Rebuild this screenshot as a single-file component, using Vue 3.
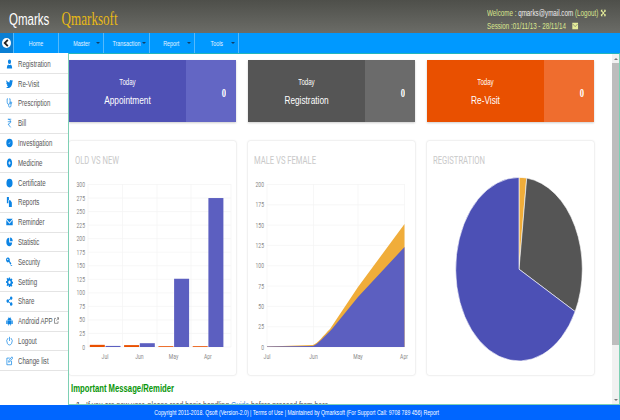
<template>
  <div class="page">
    <header class="top">
      <div class="brand sq">
        <span class="brand-name">Qmarks</span>
        <span class="brand-soft">Qmarksoft</span>
      </div>
      <div class="session">
        <div class="sq session-line">
          Welcome : <span class="mail">qmarks@ymail.com</span> (Logout)
          <svg class="tiny" viewBox="0 0 12 12"><path d="M1 1h4L3.600 2.400 6 4.800 8.400 2.400 7 1h4v4L9.600 3.600 7.200 6l2.400 2.400L11 7v4H7l1.400-1.400L6 7.200 3.600 9.600 5 11H1V7l1.400 1.400L4.800 6 2.400 3.600 1 5z" /></svg>
        </div>
        <div class="sq session-line">
          Session :01/11/13 - 28/11/14
          <svg class="tiny mailbox" viewBox="0 0 12 12"><path d="M0 1h12v10H0z" /><path class="flap" d="M1 3l5 4 5-4" /></svg>
        </div>
      </div>
    </header>

    <nav class="menu">
      <div class="back">
        <span class="back-circle">
          <svg viewBox="0 0 10 10"><path d="M6.500 1.500L3 5l3.500 3.500" /></svg>
        </span>
      </div>
      <a v-for="item in menu" :key="item.label" class="menu-item">
        <span class="sq-c">{{ item.label }}</span>
        <i v-if="item.caret" class="caret"></i>
      </a>
    </nav>

    <div class="body">
      <aside class="side">
        <a v-for="item in sideItems" :key="item.label" class="side-item">
          <svg class="side-icon" viewBox="0 0 24 24" preserveAspectRatio="none">
            <path v-if="item.fill" :d="item.fill" fill-rule="evenodd" />
            <path v-if="item.line" class="line" :d="item.line" />
          </svg>
          <span class="sq side-label">{{ item.label }}
            <svg v-if="item.external" class="external" viewBox="0 0 10 10"><path d="M8 6v3H1V2h3M5 5l4-4M6 1h3v3" /></svg>
          </span>
        </a>
      </aside>

      <main class="main">
        <div class="content">
          <section class="row stats">
            <div v-for="s in stats" :key="s.title" class="stat" :class="s.cls">
              <div class="stat-left">
                <div class="stat-today sq-c">Today</div>
                <div class="stat-title sq-c">{{ s.title }}</div>
              </div>
              <div class="stat-value"><span class="sq-r">0</span></div>
            </div>
          </section>

          <section class="row charts">
            <div class="chart-card">
              <h4><span class="sq">OLD VS NEW</span></h4>
              <svg class="chart" viewBox="0 0 167 200">
                <line v-for="g in barGrid" :key="g.label" class="grid" x1="19" x2="162" :y1="g.y" :y2="g.y" />
                <line v-for="x in [19, 53.500, 88, 122, 162]" :key="x" class="grid" :x1="x" :x2="x" y1="15" y2="178" />
                <text v-for="g in barGrid" :key="'t' + g.label" class="tick" text-anchor="end" :transform="squeeze(16, g.y + 2.500)">{{ g.label }}</text>
                <g v-for="(b, i) in bars" :key="b.month">
                  <rect class="bar-old" :x="20.800 + i * 34.300" :y="barY(b.old)" width="15" :height="178 - barY(b.old)" />
                  <rect class="bar-new" :x="36.500 + i * 34.300" :y="barY(b.fresh)" width="15" :height="178 - barY(b.fresh)" />
                  <text class="tick" text-anchor="middle" :transform="squeeze(36 + i * 34.300, 190)">{{ b.month }}</text>
                </g>
              </svg>
            </div>

            <div class="chart-card">
              <h4><span class="sq">MALE VS FEMALE</span></h4>
              <svg class="chart" viewBox="0 0 167 200">
                <line v-for="g in areaGrid" :key="g.label" class="grid" x1="19" x2="156.500" :y1="g.y" :y2="g.y" />
                <line v-for="x in [19, 65.500, 110, 156.500]" :key="x" class="grid" :x1="x" :x2="x" y1="15" y2="178" />
                <text v-for="g in areaGrid" :key="'t' + g.label" class="tick" text-anchor="end" :transform="squeeze(16, g.y + 2.500)">{{ g.label }}</text>
                <path class="area-yellow" d="M19 177.500L65 176C70 174 75 167 82 160L110 118L156.500 55V178H19Z" />
                <path class="area-blue" d="M19 177.500L65 177C70 175 76 168 84 160L110 128L156.500 78V178H19Z" />
                <text v-for="m in areaMonths" :key="m.label" class="tick" text-anchor="middle" :transform="squeeze(m.x, 190)">{{ m.label }}</text>
              </svg>
            </div>

            <div class="chart-card">
              <h4><span class="sq">REGISTRATION</span></h4>
              <svg class="chart" viewBox="0 0 167 200">
                <path v-for="p in pie" :key="p.color" :d="p.d" :fill="p.color" class="slice" />
              </svg>
            </div>
          </section>

          <h3 class="notice"><span class="sq">Important Message/Remider</span></h3>
          <ol class="notes">
            <li><span class="sq">If you are new user, please read basic handling <a>Guide</a> before proceed from here</span></li>
          </ol>
        </div>

        <div class="scrollbar">
          <span class="arrow up"></span>
          <span class="thumb"></span>
          <span class="arrow down"></span>
        </div>
      </main>
    </div>

    <footer class="foot">
      <span class="sq-c">Copyright 2011-2018. Qsoft (Version-2.0) | Terms of Use | Maintained by Qmarksoft (For Support Call: 9708 789 456) Report</span>
    </footer>
  </div>
</template>

<script setup>
const menu = [
  { label: 'Home', caret: false },
  { label: 'Master', caret: true },
  { label: 'Transaction', caret: true },
  { label: 'Report', caret: true },
  { label: 'Tools', caret: true },
];

const sideItems = [
  { label: 'Registration', fill: 'M12 1a5.500 5.500 0 1 1 0 11 5.500 5.500 0 0 1 0-11zM3 23c0-6 2-9.500 5-10 1 .8 2.500 1.300 4 1.300s3-.5 4-1.300c3 .5 5 4 5 10z' },
  { label: 'Re-Visit', fill: 'M23.950 4.570a10 10 0 0 1-2.820.770 4.960 4.960 0 0 0 2.160-2.720c-.950.550-2 .960-3.120 1.190a4.920 4.920 0 0 0-8.390 4.490C7.690 8.100 4.070 6.130 1.640 3.160a4.820 4.820 0 0 0-.670 2.480c0 1.710.870 3.210 2.190 4.100a4.900 4.900 0 0 1-2.230-.620v.060a4.920 4.920 0 0 0 3.950 4.830 5 5 0 0 1-2.210.080 4.940 4.940 0 0 0 4.600 3.420A9.870 9.870 0 0 1 0 19.540a14 14 0 0 0 7.560 2.210c9.050 0 14-7.500 14-13.980 0-.210 0-.420-.020-.630a9.940 9.940 0 0 0 2.460-2.550z' },
  { label: 'Prescription', line: 'M7 2H4v8a5 5 0 0 0 10 0V2h-3M9 15v3a4 4 0 0 0 8 0v-4M17 9a2.500 2.500 0 1 1 0 5 2.500 2.500 0 0 1 0-5z' },
  { label: 'Bill', line: 'M6 3h12M6 9h12M8 3c6 0 7 2.500 7 6s-3 5.500-7 5.500H7l9 8' },
  { label: 'Investigation', fill: 'M12 2a11 10 0 1 1 0 20 11 10 0 0 1 0-20zM7 13c2 1 7-1 8-5 1 3-3 8-8 5z' },
  { label: 'Medicine', fill: 'M12 1c5 0 9 5 9 11s-4 11-9 11-9-5-9-11S7 1 12 1zM11 8v3H8v2h3v3h2v-3h3v-2h-3V8z' },
  { label: 'Certificate', fill: 'M12 1.500a10.500 10.500 0 1 1 0 21 10.500 10.500 0 0 1 0-21z' },
  { label: 'Reports', fill: 'M3 0h7v7H8v8H3zM10 8h5l5 5v11H10z' },
  { label: 'Reminder', fill: 'M1 4h22L12 13zM1 7l11 9 11-9v13H1z' },
  { label: 'Statistic', fill: 'M11 2v11h10a10 10 0 1 1-10-11zM14 1a9.500 9.500 0 0 1 9 9h-9z' },
  { label: 'Security', fill: 'M7 1a6 6 0 0 1 5.500 8.500L18 15v2h-2l-1 2-5-7.500A6 6 0 1 1 7 1zM6 4a2 2 0 1 0 0 4 2 2 0 0 0 0-4zM16 19h5v2h-5z' },
  { label: 'Setting', fill: 'M10 1h4l.6 3.200 2.200.9L19.500 3l2.500 3-2 2.600.7 2.400 3.300.6v3.800l-3.300.6-.7 2.400 2 2.600-2.500 2.500-2.700-2-2.200.9L14 24h-4l-.6-3.100-2.200-.9-2.700 2L2 19.500l2-2.600-.7-2.400-3.300-.6V10l3.300-.6.7-2.400-2-2.600L4.500 2l2.700 2 2.200-.9zM12 8.500a4 4 0 1 0 0 8 4 4 0 0 0 0-8z' },
  { label: 'Share', fill: 'M18 1a4 4 0 1 1-3 6.600L9.800 10.700a4 4 0 0 1 0 2.600l5.200 3.100a4 4 0 1 1-1 1.800l-5.500-3.200a4 4 0 1 1 0-6l5.500-3.200A4 4 0 0 1 18 1z' },
  { label: 'Android APP', external: true, fill: 'M7 2l2 3a7 7 0 0 1 6 0l2-3 .6.4-1.800 3A6.500 6.500 0 0 1 19 10H5a6.500 6.500 0 0 1 3.200-4.600l-1.800-3zM5 11h14v8a1 1 0 0 1-1 1h-2v3h-2v-3h-4v3H8v-3H6a1 1 0 0 1-1-1zM1 11h3v8H1zM20 11h3v8h-3z' },
  { label: 'Logout', line: 'M12 2v10M7 5a9 9 0 1 0 10 0' },
  { label: 'Change list', line: 'M13 5H3v16h16v-9M9 15l1-4L20 2l3 3-10 9z' },
];

const stats = [
  { title: 'Appointment', cls: 'blue' },
  { title: 'Registration', cls: 'gray' },
  { title: 'Re-Visit', cls: 'orange' },
];

// the whole original is squashed sideways, chart labels too
const squeeze = (x, y) => `translate(${x} ${y}) scale(0.72 1)`;

const barY = (v) => 178 - (v / 300) * 162.5;

const barGrid = [];
for (let v = 0; v <= 300; v += 25) barGrid.push({ label: v, y: barY(v) });

const bars = [
  { month: 'Jul', old: 4, fresh: 2 },
  { month: 'Jun', old: 3.500, fresh: 7 },
  { month: 'May', old: 1.500, fresh: 126 },
  { month: 'Apr', old: 1.500, fresh: 275 },
];

const areaGrid = [];
for (let v = 0; v <= 200; v += 25) areaGrid.push({ label: v, y: 178 - (v / 200) * 162.5 });

const areaMonths = [
  { label: 'Jul', x: 19 },
  { label: 'Jun', x: 65.500 },
  { label: 'May', x: 110 },
  { label: 'Apr', x: 156 },
];

const cx = 92;
const cy = 100.2;
const rx = 63.3;
const ry = 91.8;
const point = (deg) => {
  const a = (deg * Math.PI) / 180;
  return `${(cx + rx * Math.sin(a)).toFixed(2)} ${(cy - ry * Math.cos(a)).toFixed(2)}`;
};
const slice = (from, to, color) => ({
  color,
  d: `M${cx} ${cy}L${point(from)}A${rx} ${ry} 0 ${to - from > 180 ? 1 : 0} 1 ${point(to)}Z`,
});
const pie = [
  slice(0, 7, '#f0ad3a'),
  slice(7, 117.5, '#555555'),
  slice(117.5, 360, '#4c50b5'),
];
</script>

<style>
html,
body {
  margin: 0;
  background: #fff;
}
</style>

<style scoped>
.page {
  width: 620px;
  height: 420px;
  display: flex;
  flex-direction: column;
  overflow: hidden;
  font-family: "Liberation Sans", Arial, sans-serif;
}

.sq,
.sq-c,
.sq-r {
  display: inline-block;
  white-space: nowrap;
  transform: scaleX(0.72);
}

.sq {
  transform-origin: left center;
}

.sq-c {
  transform-origin: center;
}

.sq-r {
  transform-origin: right center;
}

.top {
  height: 33px;
  display: flex;
  justify-content: space-between;
  background: linear-gradient(#4e4f4a, #6b6c67);
  flex: none;
}

.brand {
  padding: 9px 0 0 12.500px;
  display: flex;
  align-items: baseline;
  gap: 17px;
}

.brand-name {
  color: #fff;
  font-size: 16px;
}

.brand-soft {
  color: #e8b915;
  font-size: 18.200px;
  font-family: "Liberation Serif", serif;
}

.session {
  width: 133px;
  padding-top: 7px;
  color: #dbe68e;
  font-size: 8.700px;
  line-height: 13px;
}

.session-line {
  display: block;
}

.mail {
  color: #eee;
}

.tiny {
  width: 9px;
  height: 8px;
  fill: #e6ee9a;
  vertical-align: -1px;
}

.mailbox {
  margin-left: 6px;
}

.flap {
  fill: none;
  stroke: #6b6c67;
}

.menu {
  height: 20px;
  flex: none;
  display: flex;
  background: #0099ff;
}

.back {
  width: 13px;
  background: #0a7fd4;
  display: flex;
  align-items: center;
  justify-content: center;
}

.back-circle {
  width: 9px;
  height: 10px;
  border-radius: 50%;
  background: #fff;
  display: flex;
}

.back-circle svg {
  fill: none;
  stroke: #222;
  stroke-width: 2;
}

.menu-item {
  position: relative;
  width: 45.200px;
  box-sizing: border-box;
  border-left: 1px solid #55b9fb;
  display: flex;
  align-items: center;
  justify-content: center;
  color: #e4f3ff;
  font-size: 7.500px;
}

.caret {
  position: absolute;
  right: 3px;
  top: 9px;
  border: 2px solid transparent;
  border-top: 2.500px solid #123f66;
}

.menu-item:last-child {
  border-right: 1px solid #55b9fb;
}

.body {
  flex: 1;
  min-height: 0;
  display: flex;
}

.side {
  width: 68px;
  flex: none;
  padding-top: 1.500px;
  box-sizing: border-box;
  background: #fff;
}

.side-item {
  height: 19.800px;
  box-sizing: border-box;
  padding-left: 6px;
  display: flex;
  align-items: center;
  gap: 5px;
  border-bottom: 1px solid #e4e4e4;
  color: #555;
  font-size: 8.500px;
}

.side-icon {
  width: 7px;
  height: 10px;
  fill: #0c84e4;
  flex: none;
}

.side-label {
  width: 44px;
}

.line {
  fill: none;
  stroke: #0c84e4;
  stroke-width: 2;
}

.external {
  width: 7px;
  height: 7px;
  fill: none;
  stroke: #555;
  stroke-width: 1;
}

.main {
  flex: 1;
  min-width: 0;
  display: flex;
  box-sizing: border-box;
  border: 1px solid #7ed0b4;
  border-top-color: #22b4bc;
  background: #fff;
}

.content {
  flex: 1;
  min-width: 0;
  overflow: hidden;
}

.scrollbar {
  width: 7px;
  flex: none;
  display: flex;
  flex-direction: column;
  align-items: center;
  background: #f1f1f1;
}

.arrow {
  flex: none;
  width: 0;
  border: 2px solid transparent;
}

.up {
  margin: 4px 0 3px;
  border-bottom: 2.500px solid #777;
  border-top: 0;
}

.down {
  margin: auto 0 3px;
  border-top: 2.500px solid #777;
  border-bottom: 0;
}

.thumb {
  width: 100%;
  height: 282px;
  flex: none;
  background: #bdbdbd;
}

.row {
  display: grid;
  grid-template-columns: repeat(3, 167.330px);
  column-gap: 11.670px;
}

.stats {
  padding-top: 6px;
}

.stat {
  height: 62px;
  display: flex;
  color: #fff;
  box-shadow: 0 1px 2px rgba(0, 0, 0, 0.2);
}

.stat-left {
  width: 117px;
  text-align: center;
  padding-top: 17px;
  box-sizing: border-box;
}

.stat-today {
  display: block;
  font-size: 8.500px;
  line-height: 10px;
}

.stat-title {
  display: block;
  font-size: 11.500px;
  line-height: 14px;
  margin-top: 6px;
}

.stat-value {
  flex: 1;
  text-align: right;
  padding: 27px 10px 0 0;
  font-family: "Liberation Serif", serif;
  font-weight: bold;
  font-size: 12px;
  line-height: 12px;
}

.blue .stat-left {
  background: #4f51b5;
}

.blue .stat-value {
  background: #6366c4;
}

.gray .stat-left {
  background: #555555;
}

.gray .stat-value {
  background: #6b6b6b;
}

.orange .stat-left {
  background: #e95000;
}

.orange .stat-value {
  background: #ef6d2e;
}

.charts {
  margin-top: 19px;
}

.chart-card {
  height: 234px;
  background: #fff;
  border-radius: 2px;
  box-shadow: 0 0 2px rgba(0, 0, 0, 0.22);
}

.chart-card h4 {
  margin: 0;
  height: 28px;
  box-sizing: border-box;
  padding: 15px 0 0 6px;
  color: #c9c9c9;
  font-family: Roboto, sans-serif;
  font-weight: 400;
  font-size: 10.600px;
  line-height: 10px;
}

.chart {
  display: block;
  width: 167px;
  height: 200px;
}

.grid {
  stroke: #f4f4f4;
  stroke-width: 0.7;
}

.tick {
  fill: #888;
  font-family: Roboto, sans-serif;
  font-size: 7px;
}

.bar-old {
  fill: #e95000;
}

.bar-new {
  fill: #5c5fc0;
}

.area-yellow {
  fill: #f0ad3a;
}

.area-blue {
  fill: #5c5fc0;
}

.slice {
  stroke: #fff;
  stroke-width: 0.6;
}

.notice {
  margin: 7px 0 0 2px;
  color: #0a960a;
  font-size: 10.700px;
  line-height: 13px;
  font-weight: bold;
}

.notes {
  margin: 4px 0 0;
  padding-left: 17px;
  color: #555;
  font-size: 9.500px;
  line-height: 12px;
}

.notes a {
  color: #4a90d9;
}

.foot {
  height: 15px;
  flex: none;
  box-sizing: border-box;
  padding-right: 26px;
  background: #0066ff;
  color: #fff;
  text-align: center;
  font-size: 7.200px;
  line-height: 16px;
}
</style>
